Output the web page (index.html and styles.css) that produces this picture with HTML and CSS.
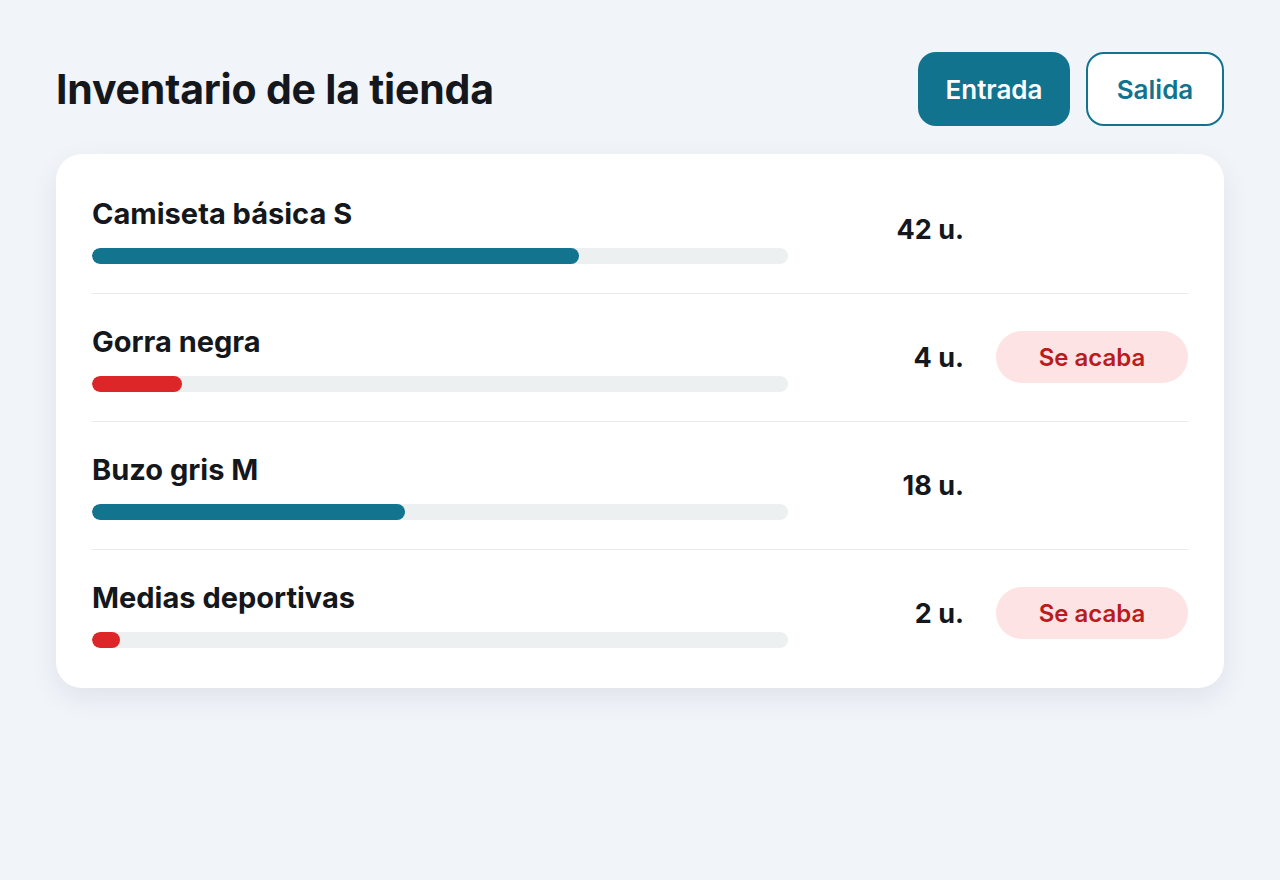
FILE: index.html
```html
<!DOCTYPE html>
<html lang="es">
<head>
    <meta charset="UTF-8">
    <meta name="viewport" content="width=device-width, initial-scale=1.0">
    <title>Inventario de la tienda</title>
    <link rel="stylesheet" href="styles.css">
</head>
<body>
    <div class="page">
        <header class="top">
            <h1>Inventario de la tienda</h1>
            <div class="actions">
                <button class="btn btn-main" type="button">Entrada</button>
                <button class="btn btn-line" type="button">Salida</button>
            </div>
        </header>

        <section class="card">
            <div class="item">
                <div class="info">
                    <div class="name">Camiseta básica S</div>
                    <div class="track"><div class="fill" style="width: 70%"></div></div>
                </div>
                <div class="qty">42 u.</div>
                <div class="flag"></div>
            </div>
            <div class="item">
                <div class="info">
                    <div class="name">Gorra negra</div>
                    <div class="track"><div class="fill low" style="width: 13%"></div></div>
                </div>
                <div class="qty">4 u.</div>
                <div class="flag"><span class="badge">Se acaba</span></div>
            </div>
            <div class="item">
                <div class="info">
                    <div class="name">Buzo gris M</div>
                    <div class="track"><div class="fill" style="width: 45%"></div></div>
                </div>
                <div class="qty">18 u.</div>
                <div class="flag"></div>
            </div>
            <div class="item">
                <div class="info">
                    <div class="name">Medias deportivas</div>
                    <div class="track"><div class="fill low" style="width: 4%"></div></div>
                </div>
                <div class="qty">2 u.</div>
                <div class="flag"><span class="badge">Se acaba</span></div>
            </div>
        </section>
    </div>
</body>
</html>
```

FILE: styles.css
```css
body {
    margin: 0;
    background-color: #f1f4f9;
    font-family: Inter, "Noto Sans", sans-serif;
    color: #14171c;
}
.page {
    padding: 52px 56px;
}
.top {
    display: flex;
    align-items: center;
    justify-content: space-between;
    margin-bottom: 28px;
}
h1 {
    margin: 0;
    font-size: 41px;
    font-weight: 700;
    letter-spacing: -0.2px;
    line-height: 48px;
}
.actions {
    display: flex;
    gap: 16px;
}
.btn {
    height: 74px;
    border-radius: 18px;
    font-family: inherit;
    font-size: 26px;
    font-weight: 600;
    cursor: pointer;
    box-sizing: border-box;
}
.btn-main {
    width: 152px;
    background-color: #12738f;
    border: none;
    color: #fff;
}
.btn-line {
    width: 138px;
    background-color: #fff;
    border: 2px solid #12738f;
    color: #12738f;
}
.card {
    background-color: #fff;
    border-radius: 26px;
    padding: 12px 36px;
    box-shadow: 0 10px 28px rgba(20, 30, 50, 0.08);
}
.item {
    display: grid;
    grid-template-columns: 696px 1fr 192px;
    column-gap: 32px;
    align-items: center;
    padding: 28px 0 29px;
    border-bottom: 1px solid #e8ebee;
}
.item:last-child {
    border-bottom: none;
    padding-bottom: 28px;
}
.name {
    font-size: 29px;
    font-weight: 700;
    line-height: 40px;
    margin-bottom: 14px;
}
.track {
    height: 16px;
    border-radius: 8px;
    background-color: #edf0f1;
    overflow: hidden;
}
.fill {
    height: 100%;
    border-radius: 8px;
    background-color: #137490;
}
.fill.low {
    background-color: #dc2628;
}
.qty {
    text-align: right;
    font-size: 27px;
    font-weight: 700;
}
.badge {
    display: flex;
    align-items: center;
    justify-content: center;
    height: 52px;
    border-radius: 26px;
    background-color: #fde3e3;
    color: #b91c1c;
    font-size: 24px;
    font-weight: 600;
}
```
